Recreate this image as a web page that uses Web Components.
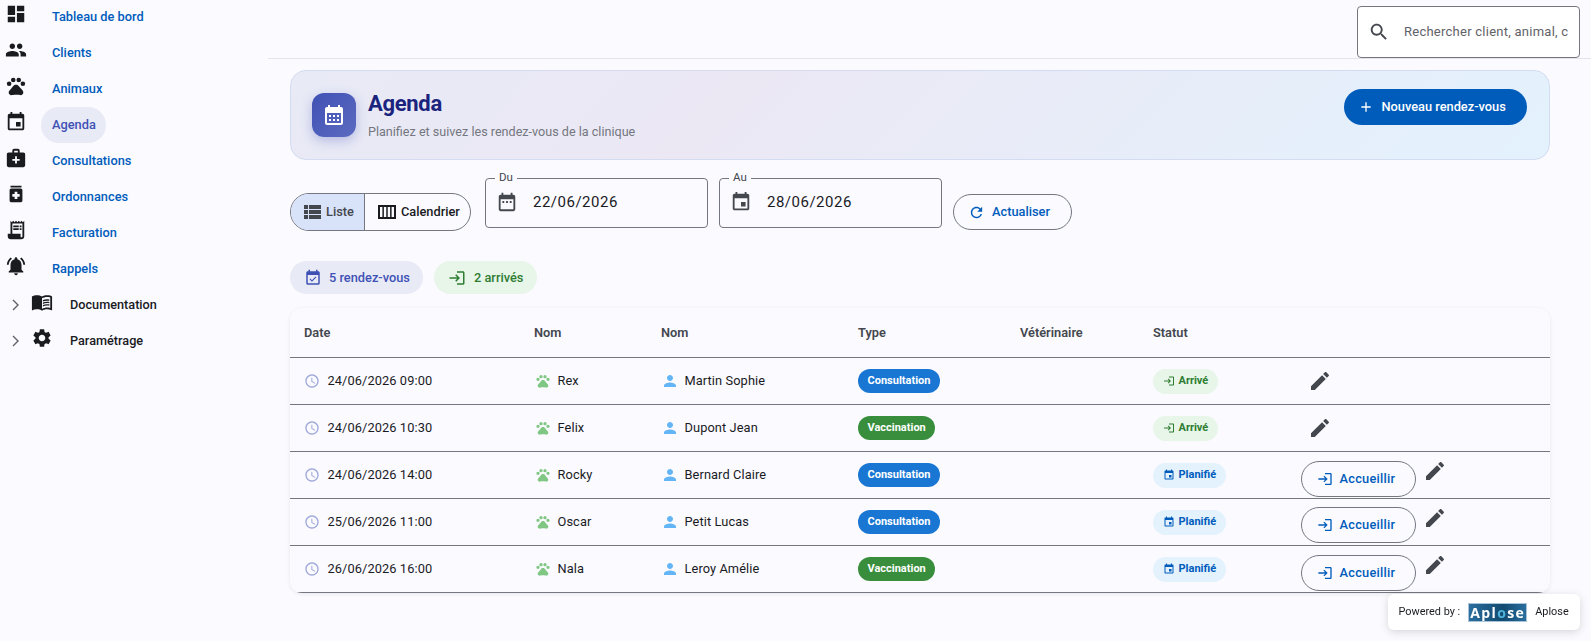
<!DOCTYPE html>
<html lang="fr"><head><meta charset="utf-8"><title>Agenda</title>
<style>
html,body{margin:0;height:100%;background:#fafaff;overflow:hidden}
body{font-family:Roboto,"Liberation Sans",sans-serif;color:#1a1b1f}
</style></head><body>
<app-shell>
  <side-nav slot="nav"></side-nav>
  <top-bar slot="top"></top-bar>
  <page-banner></page-banner>
  <filter-bar></filter-bar>
  <summary-chips></summary-chips>
  <rdv-table></rdv-table>
</app-shell>
<powered-by></powered-by>
<script>
const P={
dashboard:'M3 13h8V3H3v10zm0 8h8v-6H3v6zm10 0h8V11h-8v10zm0-18v6h8V3h-8z',
people:'M16 11c1.66 0 2.99-1.34 2.99-3S17.66 5 16 5c-1.66 0-3 1.34-3 3s1.34 3 3 3zm-8 0c1.66 0 2.99-1.34 2.99-3S9.66 5 8 5C6.34 5 5 6.34 5 8s1.34 3 3 3zm0 2c-2.33 0-7 1.17-7 3.5V19h14v-2.5c0-2.33-4.67-3.5-7-3.5zm8 0c-.29 0-.62.02-.97.05 1.16.84 1.97 1.97 1.97 3.45V19h6v-2.5c0-2.33-4.67-3.5-7-3.5z',
pets:'M2 9.5a2.5 2.5 0 1 0 5 0a2.5 2.5 0 1 0-5 0zM6.5 5.5a2.5 2.5 0 1 0 5 0a2.5 2.5 0 1 0-5 0zM12.5 5.5a2.5 2.5 0 1 0 5 0a2.5 2.5 0 1 0-5 0zM17 9.5a2.5 2.5 0 1 0 5 0a2.5 2.5 0 1 0-5 0zM17.34 14.86c-.87-1.02-1.6-1.89-2.48-2.91-.46-.54-1.05-1.08-1.75-1.32-.11-.04-.22-.07-.33-.09-.25-.04-.52-.04-.78-.04s-.53 0-.79.05c-.11.02-.22.05-.33.09-.7.24-1.28.78-1.75 1.32-.87 1.02-1.6 1.89-2.48 2.91-1.31 1.31-2.92 2.76-2.62 4.79.29 1.02 1.02 2.03 2.33 2.32.73.15 3.06-.44 5.54-.44h.18c2.48 0 4.81.58 5.54.44 1.31-.29 2.04-1.31 2.33-2.32.31-2.04-1.3-3.49-2.61-4.8z',
event:'M17 12h-5v5h5v-5zM16 1v2H8V1H6v2H5c-1.11 0-1.99.9-1.99 2L3 19c0 1.1.89 2 2 2h14c1.1 0 2-.9 2-2V5c0-1.1-.9-2-2-2h-1V1h-2zm3 18H5V8h14v11z',
medical:'M20 6h-4V4c0-1.1-.9-2-2-2h-4c-1.1 0-2 .9-2 2v2H4c-1.1 0-2 .9-2 2v12c0 1.1.9 2 2 2h16c1.1 0 2-.9 2-2V8c0-1.1-.9-2-2-2zM10 4h4v2h-4V4zm6 11h-3v3h-2v-3H8v-2h3v-3h2v3h3v2z',
medication:'M6 3h12v2H6zm11 3H7c-1.1 0-2 .9-2 2v11c0 1.1.9 2 2 2h10c1.1 0 2-.9 2-2V8c0-1.1-.9-2-2-2zm-1 9h-2.5v2.5h-3V15H8v-3h2.5V9.5h3V12H16v3z',
receipt:'M19.5 3.5L18 2l-1.5 1.5L15 2l-1.5 1.5L12 2l-1.5 1.5L9 2 7.5 3.5 6 2v14H3v3c0 1.66 1.34 3 3 3h12c1.66 0 3-1.34 3-3V2l-1.5 1.5zM19 19c0 .55-.45 1-1 1s-1-.45-1-1v-3H8V5h11v14zM9 7h6v2H9zm7 0h2v2h-2zM9 10h6v2H9zm7 0h2v2h-2z',
bell:'M7.58 4.08L6.15 2.65C3.75 4.48 2.17 7.3 2.03 10.5h2c.15-2.65 1.51-4.97 3.55-6.42zm12.39 6.42h2c-.15-3.2-1.73-6.02-4.12-7.85l-1.42 1.43c2.02 1.45 3.39 3.77 3.54 6.42zM18 11c0-3.07-1.64-5.64-4.5-6.32V4c0-.83-.67-1.5-1.5-1.5s-1.5.67-1.5 1.5v.68C7.63 5.36 6 7.92 6 11v5l-2 2v1h16v-1l-2-2v-5zm-6 11c.14 0 .27-.01.4-.04.65-.14 1.18-.58 1.44-1.18.1-.24.15-.5.15-.78h-4c.01 1.1.9 2 2.01 2z',
book:'M21 5c-1.11-.35-2.33-.5-3.5-.5-1.95 0-4.05.4-5.5 1.5-1.45-1.1-3.55-1.5-5.5-1.5S2.45 4.9 1 6v14.65c0 .25.25.5.5.5.1 0 .15-.05.25-.05C3.1 20.45 5.05 20 6.5 20c1.95 0 4.05.4 5.5 1.5 1.35-.85 3.8-1.5 5.5-1.5 1.65 0 3.35.3 4.75 1.05.1.05.15.05.25.05.25 0 .5-.25.5-.5V6c-.6-.45-1.25-.75-2-1zm0 13.5c-1.1-.35-2.3-.5-3.5-.5-1.7 0-4.15.65-5.5 1.5V8c1.35-.85 3.8-1.5 5.5-1.5 1.2 0 2.4.15 3.5.5v11.5zM17.5 10.5c.88 0 1.73.09 2.5.26V9.24c-.79-.15-1.64-.24-2.5-.24-1.7 0-3.24.29-4.5.83v1.66c1.13-.64 2.7-.99 4.5-.99zM13 12.49v1.66c1.13-.64 2.7-.99 4.5-.99.88 0 1.73.09 2.5.26V11.9c-.79-.15-1.64-.24-2.5-.24-1.7 0-3.24.3-4.5.83zM17.5 14.33c-1.7 0-3.24.29-4.5.83v1.66c1.13-.64 2.7-.99 4.5-.99.88 0 1.73.09 2.5.26v-1.52c-.79-.16-1.64-.24-2.5-.24z',
settings:'M19.14 12.94c.04-.3.06-.61.06-.94 0-.32-.02-.64-.07-.94l2.03-1.58c.18-.14.23-.41.12-.61l-1.92-3.32c-.12-.22-.37-.29-.59-.22l-2.39.96c-.5-.38-1.03-.7-1.62-.94l-.36-2.54c-.04-.24-.24-.41-.48-.41h-3.84c-.24 0-.43.17-.47.41l-.36 2.54c-.59.24-1.13.57-1.62.94l-2.39-.96c-.22-.08-.47 0-.59.22L2.74 8.87c-.12.21-.08.47.12.61l2.03 1.58c-.05.3-.09.63-.09.94s.02.64.07.94l-2.03 1.58c-.18.14-.23.41-.12.61l1.92 3.32c.12.22.37.29.59.22l2.39-.96c.5.38 1.03.7 1.62.94l.36 2.54c.05.24.24.41.48.41h3.84c.24 0 .44-.17.47-.41l.36-2.54c.59-.24 1.13-.56 1.62-.94l2.39.96c.22.08.47 0 .59-.22l1.92-3.32c.12-.22.07-.47-.12-.61l-2.01-1.58zM12 15.6c-1.98 0-3.6-1.62-3.6-3.6s1.62-3.6 3.6-3.6 3.6 1.62 3.6 3.6-1.62 3.6-3.6 3.6z',
search:'M15.5 14h-.79l-.28-.27C15.41 12.59 16 11.11 16 9.5 16 5.91 13.09 3 9.5 3S3 5.91 3 9.5 5.91 16 9.5 16c1.61 0 3.09-.59 4.23-1.57l.27.28v.79l5 4.99L20.49 19l-4.99-5zm-6 0C7.01 14 5 11.99 5 9.5S7.01 5 9.5 5 14 7.01 14 9.5 11.99 14 9.5 14z',
calmonth:'M19 4h-1V2h-2v2H8V2H6v2H5c-1.1 0-2 .9-2 2v14c0 1.1.9 2 2 2h14c1.1 0 2-.9 2-2V6c0-1.1-.9-2-2-2zm0 16H5V10h14v10zM7 12h2v2H7zm4 0h2v2h-2zm4 0h2v2h-2zm-8 4h2v2H7zm4 0h2v2h-2zm4 0h2v2h-2z',
range:'M9 11H7v2h2v-2zm4 0h-2v2h2v-2zm4 0h-2v2h2v-2zm2-7h-1V2h-2v2H8V2H6v2H5c-1.11 0-1.99.9-1.99 2L3 20c0 1.1.89 2 2 2h14c1.1 0 2-.9 2-2V6c0-1.1-.9-2-2-2zm0 16H5V9h14v11z',
list:'M4 14h4v-4H4v4zm0 5h4v-4H4v4zM4 9h4V5H4v4zm5 5h12v-4H9v4zm0 5h12v-4H9v4zM9 5v4h12V5H9z',
week:'M3 5v14h18V5H3zm2 2h2.4v10H5V7zm3.9 0h2.35v10H8.9V7zm3.85 0h2.35v10h-2.35V7zm3.85 0H19v10h-2.4V7z',
avail:'M16.53 11.06L15.47 10l-4.88 4.88-2.12-2.12-1.06 1.06L10.59 17l5.94-5.94zM19 3h-1V1h-2v2H8V1H6v2H5c-1.11 0-1.99.9-1.99 2L3 19c0 1.1.89 2 2 2h14c1.1 0 2-.9 2-2V5c0-1.1-.9-2-2-2zm0 16H5V8h14v11z',
login:'M11 7L9.6 8.4l2.6 2.6H2v2h10.2l-2.6 2.6L11 17l5-5-5-5zm9 12h-8v2h8c1.1 0 2-.9 2-2V5c0-1.1-.9-2-2-2h-8v2h8v14z',
refresh:'M17.65 6.35C16.2 4.9 14.21 4 12 4c-4.42 0-7.99 3.58-7.99 8s3.57 8 7.99 8c3.73 0 6.84-2.55 7.73-6h-2.08c-.82 2.33-3.04 4-5.65 4-3.31 0-6-2.69-6-6s2.69-6 6-6c1.66 0 3.14.69 4.22 1.78L13 11h7V4l-2.35 2.35z',
clock:'M11.99 2C6.47 2 2 6.48 2 12s4.47 10 9.99 10C17.52 22 22 17.52 22 12S17.52 2 11.99 2zM12 20c-4.42 0-8-3.58-8-8s3.58-8 8-8 8 3.58 8 8-3.58 8-8 8zm.5-13H11v6l5.25 3.15.75-1.23-4.5-2.67z',
person:'M12 12c2.21 0 4-1.79 4-4s-1.79-4-4-4-4 1.79-4 4 1.79 4 4 4zm0 2c-2.67 0-8 1.34-8 4v2h16v-2c0-2.66-5.33-4-8-4z',
edit:'M3 17.25V21h3.75L17.81 9.94l-3.75-3.75L3 17.25zM20.71 7.04c.39-.39.39-1.02 0-1.41l-2.34-2.34c-.39-.39-1.02-.39-1.41 0l-1.83 1.83 3.75 3.75 1.83-1.83z',
add:'M19 13h-6v6h-2v-6H5v-2h6V5h2v6h6v2z'
};
const ic=(n,s,c)=>`<svg width="${s}" height="${s}" viewBox="0 0 24 24" fill="${c||'currentColor'}" style="display:block;flex:none"><path d="${P[n]}"/></svg>`;
function def(name,css,html){
  customElements.define(name,class extends HTMLElement{
    constructor(){super();const r=this.attachShadow({mode:'open'});
      r.innerHTML=`<style>${css}</style>${typeof html==='function'?html(this):html}`;}
  });
}
def('app-shell',`
:host{display:grid;grid-template-columns:268px 1fr;height:641px;overflow:hidden}
main{display:flex;flex-direction:column;min-width:0}
.content{padding:11px 41px 0 22px;display:flex;flex-direction:column}
`,`<slot name="nav"></slot><main><slot name="top"></slot><div class="content"><slot></slot></div></main>`);

def('nav-item',`
:host{display:flex;height:36px;align-items:center;font:500 12.8px/20px Roboto,sans-serif;color:#005cbb;padding-left:5px;white-space:nowrap}
.i{color:#1a1b1f;margin-top:-7px}
.t{margin-left:14px;padding:0 10.5px 0 11px;height:36px;display:flex;align-items:center;border-radius:18px}
:host([active]) .t{background:#e8eaf6;color:#3f51b5}
`,el=>`<span class="i">${ic(el.getAttribute('icon'),22)}</span><span class="t"><slot></slot></span>`);

def('nav-group',`
:host{display:flex;height:36px;align-items:center;font:500 12.7px/20px Roboto,sans-serif;color:#1a1b1f;white-space:nowrap}
svg.c{margin-left:12px;margin-right:10.5px;flex:none}
.i{margin-top:-6px;color:#1a1b1f}
.t{margin-left:17.5px}
`,el=>`<svg class="c" width="8" height="12" viewBox="0 0 8 12" fill="none" stroke="#5f6268" stroke-width="1.4"><path d="M1 1l5 5-5 5"/></svg><span class="i">${ic(el.getAttribute('icon'),22)}</span><span class="t"><slot></slot></span>`);

def('side-nav',`:host{display:block;margin-top:-1px}`,`
<nav-item icon="dashboard">Tableau de bord</nav-item>
<nav-item icon="people">Clients</nav-item>
<nav-item icon="pets">Animaux</nav-item>
<nav-item icon="event" active>Agenda</nav-item>
<nav-item icon="medical">Consultations</nav-item>
<nav-item icon="medication">Ordonnances</nav-item>
<nav-item icon="receipt">Facturation</nav-item>
<nav-item icon="bell">Rappels</nav-item>
<nav-group icon="book">Documentation</nav-group>
<nav-group icon="settings">Paramétrage</nav-group>`);

def('top-bar',`
:host{display:flex;justify-content:flex-end;border-bottom:1px solid #e4e4ea;padding:6px 11px 0 0;height:52px}
.s{width:223px;height:52px;box-sizing:border-box;background:#fff;border:1px solid #74777f;border-radius:4px;display:flex;align-items:center;padding:0 11px 0 10px;position:relative;z-index:1}
.s svg{color:#44474e}
.t{margin-left:14px;font:400 13px/20px Roboto,sans-serif;letter-spacing:.25px;color:#5f6268;white-space:nowrap;flex:1}
`,`<div class="s">${ic('search',22)}<span class="t">Rechercher client, animal, c</span></div>`);

def('page-banner',`
:host{display:flex;align-items:center;height:90px;box-sizing:border-box;border:1px solid #d3dcf0;border-radius:16px;background:linear-gradient(135deg,#e8eaf6 0%,#ebe8f4 35%,#e3f2fd 100%);padding:0 22px 0 21px}
.b{width:44px;height:44px;border-radius:12px;background:linear-gradient(135deg,#3f51b5,#5c6bc0);box-shadow:0 4px 12px rgba(63,81,181,.3);display:flex;align-items:center;justify-content:center;color:#fff}
.t{margin-left:12px;flex:1}
h1{margin:0;font:700 22px/28px Roboto,sans-serif;color:#1a237e;letter-spacing:-.3px}
p{margin:5px 0 0;font:400 12.6px/18px Roboto,sans-serif;color:#74777f}
.n{display:flex;align-items:center;align-self:flex-start;margin-top:18px;height:36px;width:183px;box-sizing:border-box;border-radius:18px;background:#005cbb;color:#fff;font:500 12.8px/20px Roboto,sans-serif;padding-left:14px}
.n span{margin-left:7.5px}
`,`<div class="b">${ic('calmonth',24)}</div><div class="t"><h1>Agenda</h1><p>Planifiez et suivez les rendez-vous de la clinique</p></div><div class="n">${ic('add',16)}<span>Nouveau rendez-vous</span></div>`);

def('date-field',`
:host{display:flex;align-items:center;position:relative;width:223px;height:50px;box-sizing:border-box;border:1px solid #74777f;border-radius:4px;padding:0 0 2px 10px;font:400 15px/24px Roboto,sans-serif;color:#1a1b1f}
.i{color:#44474e}
.v{margin-left:15px;letter-spacing:.5px}
label{position:absolute;left:9px;top:-9px;padding:0 4px;background:#fafaff;font:400 11.5px/14px Roboto,sans-serif;color:#44474e}
`,el=>`<label>${el.getAttribute('label')}</label><span class="i">${ic(el.getAttribute('icon'),22)}</span><span class="v"><slot></slot></span>`);

def('filter-bar',`
:host{display:flex;align-items:center;gap:11px;margin-top:18px;height:50px}
.tg{display:flex;height:38px;width:181px;box-sizing:border-box;border:1px solid #74777f;border-radius:19px;overflow:hidden;font:500 12.8px/20px Roboto,sans-serif;margin-top:18px;margin-right:3px}
.tg div{display:flex;align-items:center;gap:2px}
.a{background:#d8e2f8;color:#44474e;width:74px;padding-left:9px;box-sizing:border-box;border-right:1px solid #74777f}
.b{flex:1;padding-left:10px}
.r{display:flex;align-items:center;height:36px;width:119px;box-sizing:border-box;border:1px solid #74777f;border-radius:18px;color:#005cbb;font:500 12.8px/20px Roboto,sans-serif;padding-left:14px;gap:7px;margin-top:18px}
`,`<div class="tg"><div class="a">${ic('list',24)}Liste</div><div class="b">${ic('week',24)}Calendrier</div></div>
<date-field label="Du" icon="range">22/06/2026</date-field><date-field label="Au" icon="event">28/06/2026</date-field>
<div class="r">${ic('refresh',17)}Actualiser</div>`);

def('summary-chips',`
:host{display:flex;gap:11px;margin-top:33px;font:500 12.8px/20px Roboto,sans-serif}
div{display:flex;align-items:center;height:33px;border-radius:17px;box-sizing:border-box;gap:7px}
.a{width:133px;background:#e8eaf6;color:#3f51b5;padding-left:14px}
.b{width:103px;background:#e8f5e9;color:#2e7d32;padding-left:14px;gap:8px}
`,`<div class="a">${ic('avail',18)}5 rendez-vous</div><div class="b">${ic('login',18)}2 arrivés</div>`);

const COLS='230px 127px 197px 162px 133px 148px 1fr';
def('rdv-table',`
:host{display:block;margin-top:14px;border-radius:12px;overflow:hidden;box-shadow:0 1px 4px rgba(0,0,0,.08)}
.h{display:grid;grid-template-columns:${COLS};height:50px;box-sizing:border-box;border-bottom:1px solid #74777f;align-items:center;font:600 12.8px/20px Roboto,sans-serif;color:#44474e;padding-top:1px}
.h span{padding-left:14px}
`,`<div class="h"><span>Date</span><span>Nom</span><span>Nom</span><span>Type</span><span>Vétérinaire</span><span>Statut</span><span></span></div>
<rdv-row date="24/06/2026 09:00" animal="Rex" client="Martin Sophie" type="Consultation" statut="Arrivé"></rdv-row>
<rdv-row date="24/06/2026 10:30" animal="Felix" client="Dupont Jean" type="Vaccination" statut="Arrivé"></rdv-row>
<rdv-row date="24/06/2026 14:00" animal="Rocky" client="Bernard Claire" type="Consultation" statut="Planifié" bt="9"></rdv-row>
<rdv-row date="25/06/2026 11:00" animal="Oscar" client="Petit Lucas" type="Consultation" statut="Planifié" bt="8"></rdv-row>
<rdv-row date="26/06/2026 16:00" animal="Nala" client="Leroy Amélie" type="Vaccination" statut="Planifié" bt="9"></rdv-row>`);

def('rdv-row',`
:host{display:grid;grid-template-columns:${COLS};height:47px;box-sizing:border-box;border-bottom:1px solid #74777f;font:400 12.8px/20px Roboto,sans-serif;letter-spacing:.1px;color:#1a1b1f;align-items:center}
.c{padding-left:14px;display:flex;align-items:center;white-space:nowrap}
.d svg{margin-right:7.5px}
.a svg{margin-left:.5px;margin-right:7px}
.p svg{margin-right:5.5px}
.t{margin-left:14px;justify-self:start;height:24px;border-radius:12px;padding:0 9.5px;display:flex;align-items:center;font:700 11px/14px Roboto,sans-serif;letter-spacing:0;color:#fff}
.st{margin-left:14px;justify-self:start;height:25px;border-radius:13px;padding:0 9.5px;display:flex;align-items:center;gap:4px;font:700 11px/14px Roboto,sans-serif;letter-spacing:0}
.ok{background:#e8f5e9;color:#2e7d32}
.pl{background:#e3f2fd;color:#005cbb}
.act{display:flex;align-items:flex-start;align-self:start;height:46px;padding-left:14px}
.e{color:#44474e;margin:11px 0 0 7px}
.has .e{margin-top:7px}
.w{display:flex;align-items:center;gap:6.5px;width:115px;height:36px;padding-left:15px;box-sizing:border-box;border:1px solid #74777f;border-radius:18px;color:#005cbb;font:500 12.8px/20px Roboto,sans-serif;letter-spacing:.25px}
`,el=>{
 const g=n=>el.getAttribute(n);const v=g('type')==='Vaccination';const ar=g('statut')==='Arrivé';const bt=g('bt');
 return `<div class="c d">${ic('clock',16,'#9fa8da')}${g('date')}</div>
 <div class="c a">${ic('pets',16,'#81c784')}${g('animal')}</div>
 <div class="c p">${ic('person',18,'#64b5f6')}${g('client')}</div>
 <div class="t" style="background:${v?'#388e3c':'#1976d2'}">${g('type')}</div>
 <div></div>
 <div class="st ${ar?'ok':'pl'}">${ic(ar?'login':'event',12)}${g('statut')}</div>
 <div class="act ${bt?'has':''}">${bt?`<div class="w" style="margin-top:${bt}px">${ic('login',16)}Accueillir</div>`:''}<span class="e">${ic('edit',24)}</span></div>`;
});

def('powered-by',`
:host{position:fixed;right:11px;bottom:11px;width:192px;height:36px;box-sizing:border-box;background:#fff;border-radius:6px;box-shadow:0 2px 8px rgba(0,0,0,.15);display:flex;align-items:center;padding-left:10.5px;font:400 10.9px/16px Roboto,sans-serif;color:#1a1b1f;white-space:nowrap}
.l{margin:0 8px;width:59px;height:19px;box-sizing:border-box;border:1px solid #a9c4d8;background:linear-gradient(90deg,#2a6e9e,#124a70 60%,#2a6e9e);color:#fff;font:700 14px/17px "Open Sans",Roboto,sans-serif;letter-spacing:1.4px;text-align:center;overflow:hidden}
.l b{color:#4fb3d9;font-weight:700}
`,`<span>Powered by :</span><span class="l">Apl<b>o</b>se</span><span>Aplose</span>`);
</script>
</body></html>
